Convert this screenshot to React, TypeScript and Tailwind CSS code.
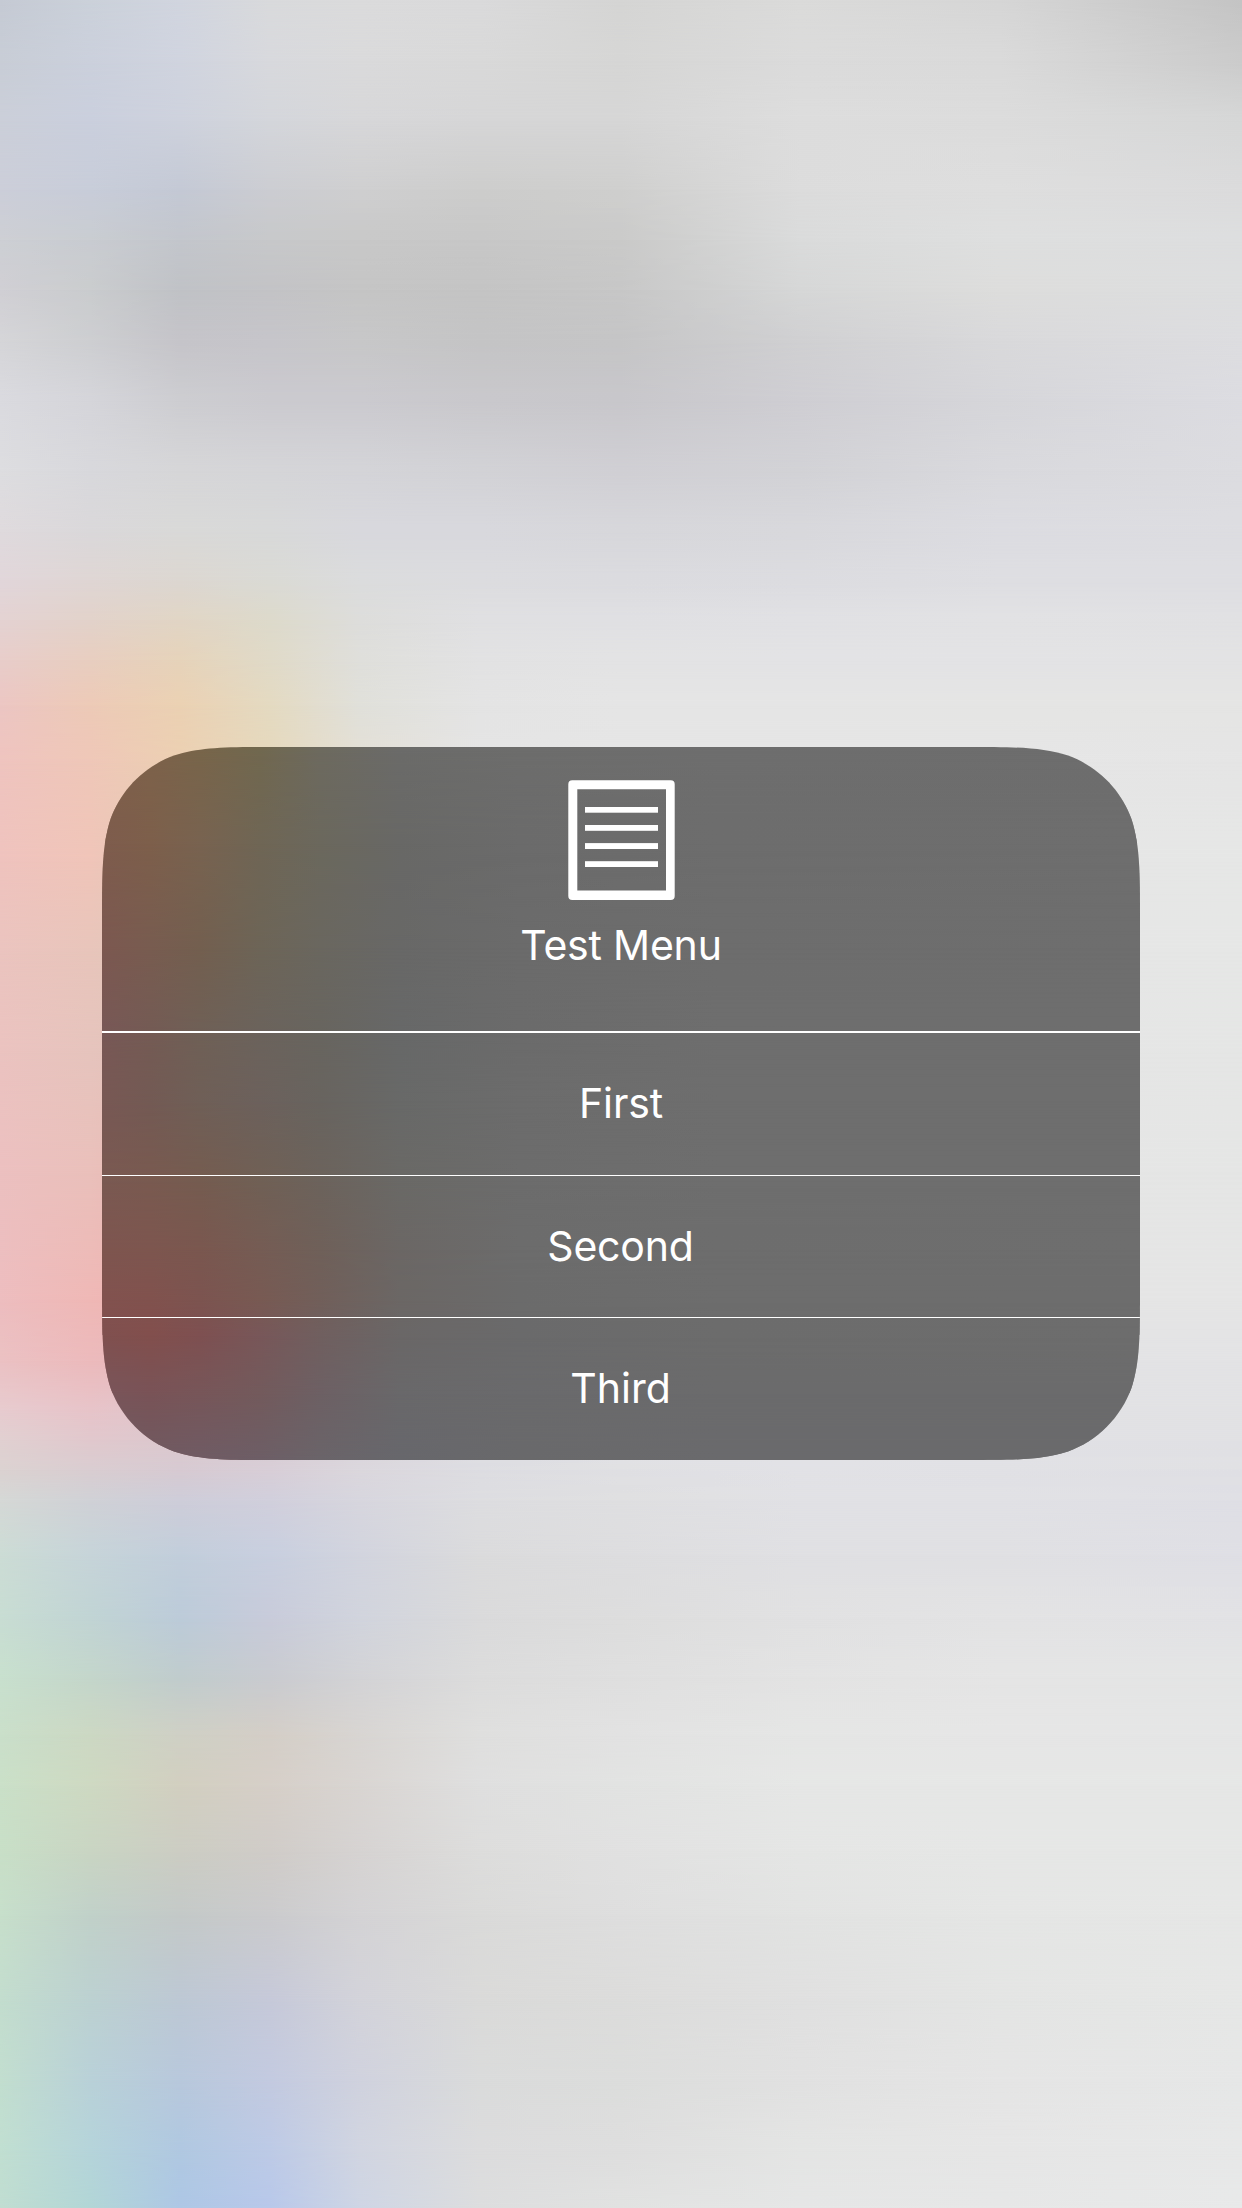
type Mesh = { xs: number[]; rows: [number, string][] };

// Each row is a vertical position followed by one colour per horizontal stop.
const wallpaper: Mesh = {
  xs: [0, 90, 180, 270, 360, 480, 620, 800, 1000, 1242],
  rows: [
    [0, "c5cad4 cbd1da d1d5df d9dadc dbdbdc dadadb d5d5d4 dbdbda d6d6d6 c4c4c4"],
    [60, "c8cdd6 cbd0dc d0d4df d8d9dd dadadb d9d9d9 d6d6d5 dbdbdb dadada cbcbcb"],
    [120, "cbcfd9 cacfdd ced2dd d4d6db d7d7d9 d6d6d7 d6d6d6 dddddd dcdcdc d6d7d7"],
    [190, "ccced9 c8cdd9 c4c9d5 cccdd2 cfcfd0 cdcdcc cfcfce dcdcdc dedede dbdbdc"],
    [240, "cdcfd4 c9ccd1 c3c6cc c7c8ca c8c8c8 c7c7c7 cacac9 dadbdb dedfdf dddedf"],
    [290, "d0cfd4 caccce c0c2c6 c3c3c6 c5c5c5 c4c4c4 c7c7c7 d6d7d7 dddddc dddedf"],
    [340, "d5d5d8 cdced1 c5c4c9 c6c5ca c7c7c8 c4c4c5 c5c5c6 d0d0d2 d9d9db dddde0"],
    [400, "dadadf d5d5da cdcdd1 cbcacf cbcacf c9c8cc c8c7cb cfced3 d6d6da dcdce1"],
    [470, "dddde0 d8d8dc d6d6d8 d5d5d8 d4d4d8 d2d2d6 d0cfd4 d2d2d6 d9d9dd dcdce0"],
    [530, "dfdadd dad8da d9d9d8 d8d9d9 d8d8dd d8d8dd d7d7db d8d8dc dcdce1 dddde1"],
    [580, "e1d6da dfd6d4 dcd7d1 dadad5 dbdcdd dcdcdf dbdbdf dcdce0 dedee2 dedee2"],
    [620, "e4d2d2 e2d2ca e1d5c5 dddacb dddddb e0e0e2 e0e0e3 e1e1e4 e2e2e4 e1e1e3"],
    [660, "e8cdca e8cec0 e6d3ba e0dac8 dfdfdb e2e2e3 e3e3e4 e3e3e5 e3e3e5 e3e3e4"],
    [705, "ecc6c3 edcab7 ebd1b3 e4dac1 e0e0da e4e4e4 e5e5e5 e5e5e5 e5e5e4 e5e5e4"],
    [760, "efc4bf efc7b8 ecd0b2 e6d9bd e4e0d6 e5e5e5 e6e6e6 e6e6e6 e6e6e6 e5e5e5"],
    [860, "efc3be f0c5b9 dfcbb9 dcd3c4 dbd9d0 e2e2e2 e6e6e6 e6e6e6 e6e6e6 e6e7e6"],
    [950, "ebc4bf e8c5bb dfcbb9 dcd3c4 dbd9d0 e2e2e2 e6e6e6 e6e6e6 e6e6e6 e6e7e6"],
    [1050, "ebc3c0 e6c4bd e0c3b9 d8cac0 dbd5d0 e3e3e3 e6e6e6 e6e6e6 e6e6e6 e5e6e5"],
    [1170, "ecc0c0 eac0bb e8b5b0 dfc0b6 ddd4cd e3e3e3 e6e6e6 e6e6e6 e6e6e6 e5e6e5"],
    [1300, "edbdbf efb8b6 efb2af e3b5b3 ddd4d1 e1e1e1 e4e4e4 e4e4e4 e5e5e5 e5e5e5"],
    [1361, "ebc1c3 ecbabc e4b8bd dcbec5 dbced3 dfdfe2 e3e3e6 e3e3e6 e3e3e5 e3e3e5"],
    [1410, "e7cbcf e7c4c9 e0c5cc d9c9d0 dad2d8 dedee2 e2e2e6 e2e2e6 e2e2e5 e2e2e4"],
    [1440, "e1d0d1 e1c8cd dcc8ce d9cbd2 dad4da dedee2 e1e1e5 e2e2e6 e1e1e5 e1e1e4"],
    [1470, "dbd2d1 d9cdd1 d7cad2 d8ced7 dbd7dd dddde2 e0e0e3 e2e2e6 e1e1e5 e0e0e4"],
    [1500, "d5d8d6 d0d1d6 cecdd9 d1cfdc d7d6de dddde0 dfdfe1 e1e1e5 e1e1e5 dfdfe5"],
    [1555, "ccdcd5 c6d4d9 c2cedb c8cfdf d2d4de dbdbdc dddddf e0e0e3 e0e0e3 dfdfe5"],
    [1618, "c8ddd3 c1d4d4 bccbd9 c8cbda d1d4dd dadadb dddddd e1e1e2 e3e3e4 e2e2e5"],
    [1677, "c8e0ce c4d6cb c0cccd c9cbd0 d3d3d6 dcdcdc dfdfdf e3e3e3 e5e5e5 e4e5e5"],
    [1735, "cadfca ccd8c3 cfd0c5 d4cec7 d8d5d2 dfdfde e2e2e2 e5e6e5 e6e6e6 e5e6e6"],
    [1785, "cae0c8 ced9c2 d2cfc0 d6cfc8 d9d5d2 dfdfdf e2e3e2 e6e7e6 e6e7e6 e6e7e6"],
    [1850, "c8dfc7 c9d5c3 cccdc3 d0ccc8 d6d3d2 dddddc e1e1e1 e5e6e5 e6e7e6 e6e7e6"],
    [1915, "c7dfcb c1d1c9 c4c9c8 cbcbcd d4d3d5 dadad9 dedede e2e3e2 e5e6e5 e6e7e6"],
    [2000, "c3ddce bcd1d1 bdc8d4 c6c9d9 d3d3da dadad9 dcdcdb e0e0e0 e4e5e4 e6e7e6"],
    [2080, "c2decf b9d1d8 b8c8dc c3cae0 d0d2de dadbdb dcdddc e1e1e1 e5e5e5 e6e7e7"],
    [2150, "c1dfd1 b5d4da b0c8e1 bdcae6 d1d5e1 dcdcdd dedede e4e5e4 e6e6e6 e7e8e8"],
    [2208, "c0ddd1 b2d6d6 adc7e5 b8c8ea ced5e4 dcddde e1e2e1 e5e6e6 e6e7e7 e8e9e9"],
  ],
};

const panelTint: Mesh = {
  xs: [0, 48, 98, 158, 218, 298, 418, 618, 1038],
  rows: [
    [0, "7f5f4a 7d624a 78654a 71684f 6d6a5f 6b6b69 6d6d6c 6e6e6e 6d6d6d"],
    [97, "7e5c4d 7d5f4b 786350 6f6655 6b685d 686866 6b6b6b 6d6d6d 6e6e6e"],
    [199, "7c5850 785c50 735f4f 6d6557 6a675f 686867 6b6b6b 6d6d6d 6e6e6e"],
    [284, "785856 745b54 6f6056 6b635c 68655f 676868 6b6b6b 6e6e6e 6e6e6e"],
    [353, "785854 735a54 6f5f57 6c615c 68645f 686968 6c6c6c 6e6e6e 6e6e6e"],
    [433, "7a5952 795a50 755c50 706055 6c635c 6a6966 6c6c6c 6e6e6e 6e6e6e"],
    [503, "7e554f 7d564f 7a574f 755c54 6f6059 6b6765 6c6c6c 6d6d6d 6e6e6e"],
    [553, "82524f 81524e 7c5450 785a53 715f5a 6b6765 6b6b6b 6d6d6d 6d6d6d"],
    [588, "80504f 824f4d 7e5051 785759 705f5f 6a6767 6a6a6b 6c6c6c 6d6d6d"],
    [646, "79555a 795357 775659 735a5c 6d6064 69686a 6a6a6c 6b6b6c 6b6b6c"],
    [713, "6c5c62 6f5a61 6f5b64 6d5e66 6a6469 67676c 69696b 6a6a6d 6a6a6c"],
  ],
};

// Stacked bands, each fading from its own row of colours into the next row.
function ColourMesh({ mesh }: { mesh: Mesh }) {
  const gradient = (colours: string) =>
    `linear-gradient(to right, ${colours
      .split(" ")
      .map((c, k) => `#${c} ${mesh.xs[k]}px`)
      .join(", ")})`;
  return (
    <div className="col-start-1 row-start-1 flex flex-col">
      {mesh.rows.slice(1).map(([y, colours], i) => {
        const [top, topColours] = mesh.rows[i];
        return (
          <div
            key={y}
            className="grid shrink-0"
            style={{ height: y - top, backgroundImage: gradient(topColours) }}
          >
            <div
              className="mask-t-from-0%"
              style={{ backgroundImage: gradient(colours), maskImage: "linear-gradient(to bottom, transparent, black)" }}
            />
          </div>
        );
      })}
    </div>
  );
}

// Continuous-curvature rounded rectangle.
function squircle(w: number, h: number, r: number) {
  const corner: [number, number][] = [
    [1.52866, 0],
    [1.08849, 0],
    [0.86841, 0],
    [0.63149, 0.07491],
    [0.37282, 0.16906],
    [0.16906, 0.37282],
    [0.07491, 0.63149],
    [0, 0.86841],
    [0, 1.08849],
    [0, 1.52866],
  ];
  const place = (fx: boolean, fy: boolean, flip: boolean) => {
    const p = (flip ? [...corner].reverse() : corner).map(
      ([x, y]) => `${fx ? w - x * r : x * r} ${fy ? h - y * r : y * r}`
    );
    return `${p[0]} C${p.slice(1, 4).join(" ")} C${p.slice(4, 7).join(" ")} C${p.slice(7).join(" ")}`;
  };
  return `M${place(true, false, false)} L${place(true, true, true)} L${place(false, true, false)} L${place(false, false, true)} Z`;
}

function DocumentIcon() {
  return (
    <svg className="h-[120px] w-[107px]" viewBox="0 0 107 120" fill="#fff">
      <path
        fillRule="evenodd"
        d="M4.3 0.2H102.7a4 4 0 0 1 4 4V116a4 4 0 0 1-4 4H4.3a4 4 0 0 1-4-4V4.2a4 4 0 0 1 4-4ZM9.3 9.2V110.5H98V9.2Z"
      />
      <rect x="17" y="27" width="73" height="5.7" />
      <rect x="17" y="45" width="73" height="5.8" />
      <rect x="17" y="63.1" width="73" height="5.9" />
      <rect x="17" y="81.2" width="73" height="5.8" />
    </svg>
  );
}

export default function App() {
  return (
    <main className="grid h-[2208px] w-[1242px] overflow-hidden font-['Inter','Liberation_Sans',sans-serif] text-[41px] leading-[50px] text-white">
      <ColourMesh mesh={wallpaper} />
      <section
        className="z-10 col-start-1 row-start-1 mt-[747px] ml-[102px] grid h-[713px] w-[1038px]"
        style={{ clipPath: `path("${squircle(1038, 713, 114)}")` }}
      >
        <ColourMesh mesh={panelTint} />
        <div className="z-10 col-start-1 row-start-1 flex flex-col">
          <header className="flex h-[286px] flex-col items-center border-b-2 border-white pt-[33px]">
            <DocumentIcon />
            <h1 className="mt-[20px] tracking-[-0.2px]">Test Menu</h1>
          </header>
          <ul className="divide-y divide-white text-center leading-[140px]">
            <li className="h-[143px] tracking-[-0.15px]">First</li>
            <li className="h-[142px] pr-px tracking-[-0.2px]">Second</li>
            <li className="h-[142px] pr-px">Third</li>
          </ul>
        </div>
      </section>
    </main>
  );
}
